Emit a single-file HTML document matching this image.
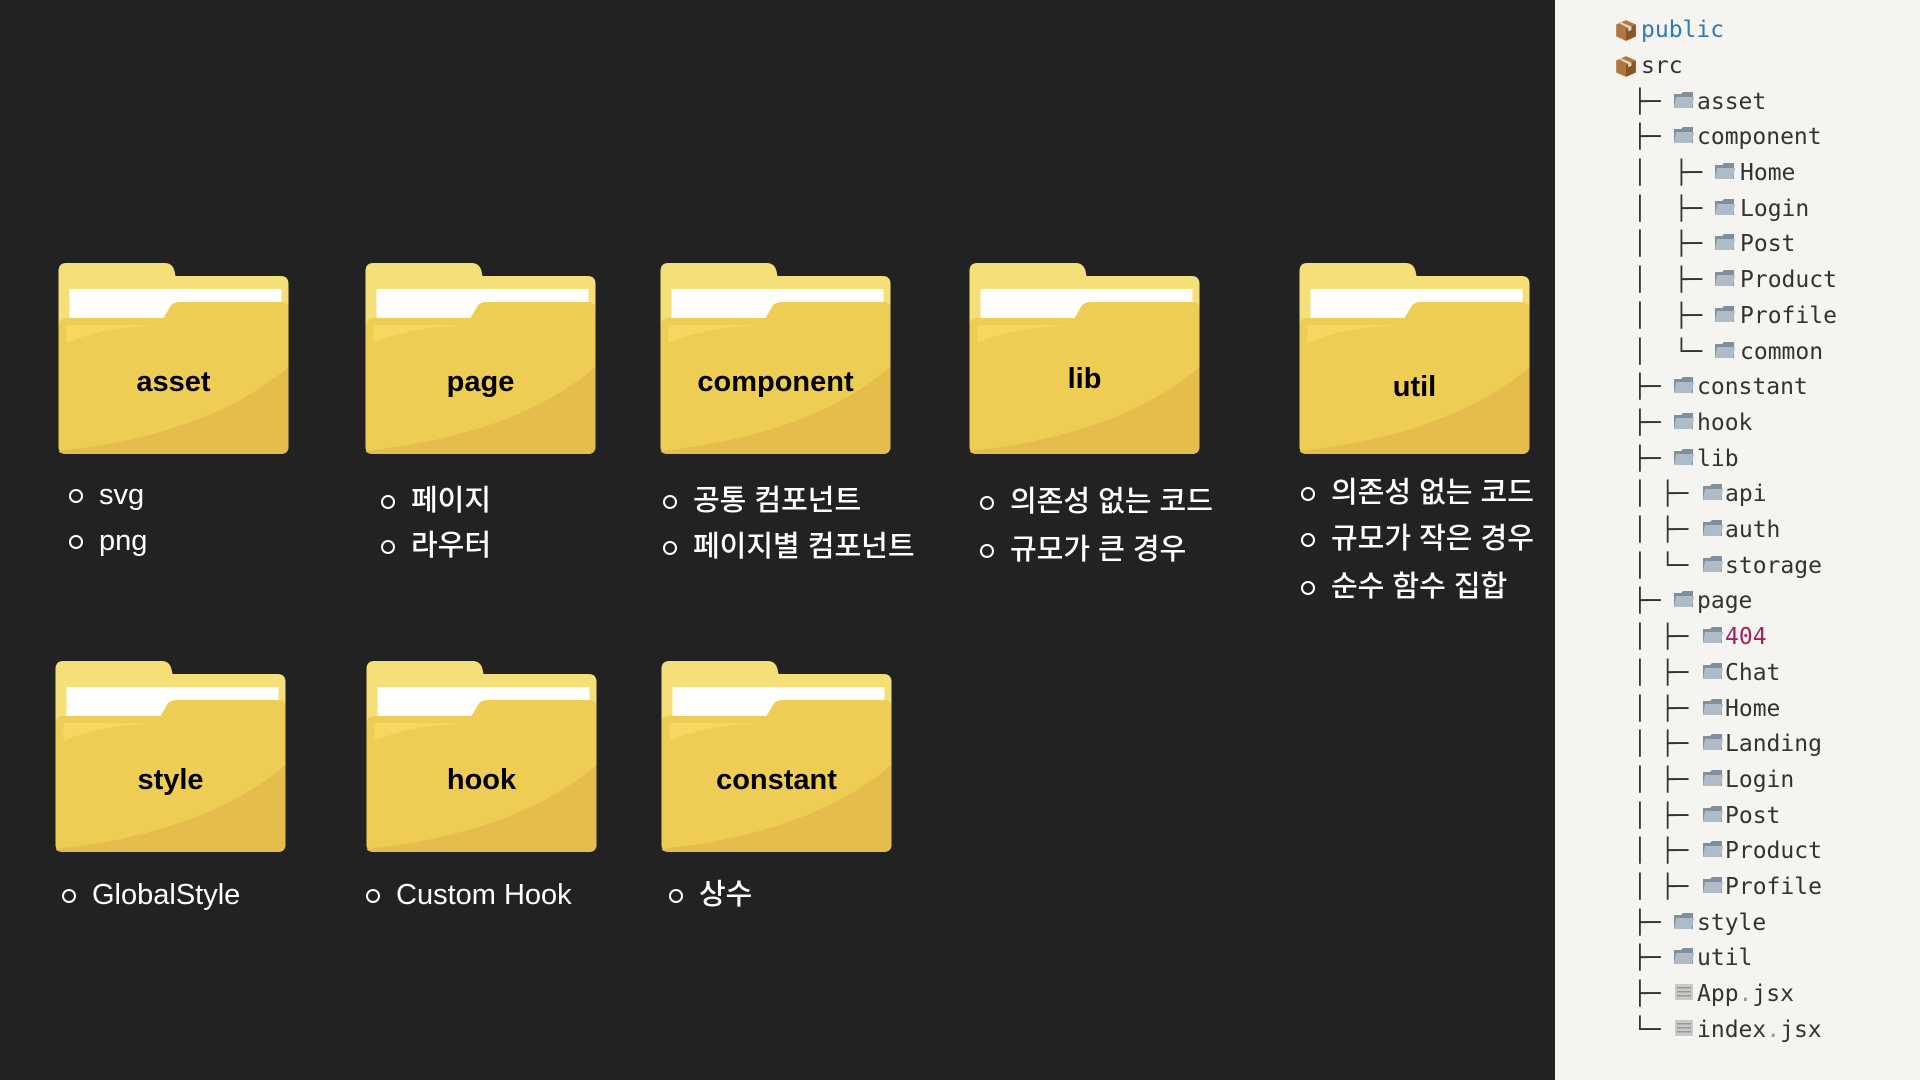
<!DOCTYPE html>
<html><head><meta charset="utf-8"><style>
html,body{margin:0;padding:0}
body{width:1920px;height:1080px;background:#222222;position:relative;overflow:hidden;font-family:"Liberation Sans","Noto Sans CJK KR",sans-serif}
.f{position:absolute;width:231px;height:191px}
.f svg{position:absolute;left:0;top:0}
.f span{position:absolute;left:0;width:231px;text-align:center;top:102px;font-size:29px;font-weight:bold;color:#000;line-height:34px}
.b{position:absolute;color:#fff;font-size:29px;line-height:34px;white-space:nowrap;font-weight:500}
.b:before{content:"";position:absolute;left:-30px;top:11px;width:10px;height:10px;border:2.5px solid #fff;border-radius:50%}
#side{position:absolute;left:1555px;top:0;width:365px;height:1080px;background:#f5f4f1}
.t{position:absolute;font-family:"DejaVu Sans Mono","Liberation Mono",monospace;font-size:23px;color:#333;line-height:30px;white-space:pre}
.ic{position:absolute;width:22px;height:20px}
</style></head><body>
<svg width="0" height="0" style="position:absolute"><defs>
<symbol id="fold" viewBox="0 0 230 191">
<path d="M0,8 Q0,0 8,0 H106 Q114,0 116,8 L117,13 H222 Q230,13 230,21 V183 Q230,191 222,191 H8 Q0,191 0,183 Z" fill="#f5df78"/>
<rect x="11" y="26" width="212" height="34" fill="#fff"/>
<path d="M0,63 Q0,55 8,55 H105 L112,43 Q115,39 121,39 H223 Q230,39 230,46 V183 Q230,191 222,191 H8 Q0,191 0,183 Z" fill="#eecd55"/>
<path d="M8,62 H100 Q40,65 8,80 Z" fill="#f4d862"/>
<path d="M0,188 Q150,172 230,104 V183 Q230,191 222,191 H8 Q2,191 0,188 Z" fill="#e4bd4c"/>
</symbol>
<symbol id="dir" viewBox="0 0 22 20"><path d="M1,4 H8 L10,2 H20 V18 H1 Z" fill="#7f8f9c"/><path d="M3,7 H21 L19,18 H1 Z" fill="#aebcc8"/></symbol>
<symbol id="box" viewBox="0 0 22 22"><path d="M2,6 L11,2 L20,6 V17 L11,21 L2,17 Z" fill="#b07840"/><path d="M11,10 L20,6 V17 L11,21 Z" fill="#8a5628"/><path d="M7,4 L16,8 V11 L13,12 V9 L5,5 Z" fill="#e8d8c0"/></symbol>
<symbol id="file" viewBox="0 0 22 20"><rect x="2" y="2" width="18" height="16" fill="#c9c9c9"/><rect x="4" y="5" width="14" height="1.5" fill="#999"/><rect x="4" y="9" width="14" height="1.5" fill="#999"/><rect x="4" y="13" width="14" height="1.5" fill="#999"/></symbol>
</defs></svg>

<div class="f" style="left:58px;top:263px"><svg width="231" height="191"><use href="#fold"/></svg><span>asset</span></div>
<div class="f" style="left:365px;top:263px"><svg width="231" height="191"><use href="#fold"/></svg><span>page</span></div>
<div class="f" style="left:660px;top:263px"><svg width="231" height="191"><use href="#fold"/></svg><span>component</span></div>
<div class="f" style="left:969px;top:263px"><svg width="231" height="191"><use href="#fold"/></svg><span style="top:99px">lib</span></div>
<div class="f" style="left:1299px;top:263px"><svg width="231" height="191"><use href="#fold"/></svg><span style="top:107px">util</span></div>
<div class="f" style="left:55px;top:661px"><svg width="231" height="191"><use href="#fold"/></svg><span>style</span></div>
<div class="f" style="left:366px;top:661px"><svg width="231" height="191"><use href="#fold"/></svg><span>hook</span></div>
<div class="f" style="left:661px;top:661px"><svg width="231" height="191"><use href="#fold"/></svg><span>constant</span></div>

<div class="b" style="left:99px;top:478px">svg</div>
<div class="b" style="left:99px;top:524px">png</div>
<div class="b" style="left:411px;top:484px">페이지</div>
<div class="b" style="left:411px;top:529px">라우터</div>
<div class="b" style="left:693px;top:484px">공통 컴포넌트</div>
<div class="b" style="left:693px;top:530px">페이지별 컴포넌트</div>
<div class="b" style="left:1010px;top:485px">의존성 없는 코드</div>
<div class="b" style="left:1010px;top:533px">규모가 큰 경우</div>
<div class="b" style="left:1331px;top:476px">의존성 없는 코드</div>
<div class="b" style="left:1331px;top:522px">규모가 작은 경우</div>
<div class="b" style="left:1331px;top:570px">순수 함수 집합</div>
<div class="b" style="left:92px;top:878px">GlobalStyle</div>
<div class="b" style="left:396px;top:878px">Custom Hook</div>
<div class="b" style="left:699px;top:878px">상수</div>

<div id="side"></div>
<svg class="ic" style="left:1614px;top:18px;width:24px;height:24px"><use href="#box"/></svg><div class="t" style="left:1641px;top:15px;color:#2f7bb5">public</div>
<svg class="ic" style="left:1614px;top:54px;width:24px;height:24px"><use href="#box"/></svg><div class="t" style="left:1641px;top:51px">src</div>

<div class="t" style="left:1633px;top:87px">├─</div><svg class="ic" style="left:1673px;top:90px"><use href="#dir"/></svg><div class="t" style="left:1697px;top:87px">asset</div>
<div class="t" style="left:1633px;top:122px">├─</div><svg class="ic" style="left:1673px;top:125px"><use href="#dir"/></svg><div class="t" style="left:1697px;top:122px">component</div>
<div class="t" style="left:1633px;top:158px">│  ├─</div><svg class="ic" style="left:1714px;top:161px"><use href="#dir"/></svg><div class="t" style="left:1740px;top:158px">Home</div>
<div class="t" style="left:1633px;top:194px">│  ├─</div><svg class="ic" style="left:1714px;top:197px"><use href="#dir"/></svg><div class="t" style="left:1740px;top:194px">Login</div>
<div class="t" style="left:1633px;top:229px">│  ├─</div><svg class="ic" style="left:1714px;top:232px"><use href="#dir"/></svg><div class="t" style="left:1740px;top:229px">Post</div>
<div class="t" style="left:1633px;top:265px">│  ├─</div><svg class="ic" style="left:1714px;top:268px"><use href="#dir"/></svg><div class="t" style="left:1740px;top:265px">Product</div>
<div class="t" style="left:1633px;top:301px">│  ├─</div><svg class="ic" style="left:1714px;top:304px"><use href="#dir"/></svg><div class="t" style="left:1740px;top:301px">Profile</div>
<div class="t" style="left:1633px;top:337px">│  └─</div><svg class="ic" style="left:1714px;top:340px"><use href="#dir"/></svg><div class="t" style="left:1740px;top:337px">common</div>
<div class="t" style="left:1633px;top:372px">├─</div><svg class="ic" style="left:1673px;top:375px"><use href="#dir"/></svg><div class="t" style="left:1697px;top:372px">constant</div>
<div class="t" style="left:1633px;top:408px">├─</div><svg class="ic" style="left:1673px;top:411px"><use href="#dir"/></svg><div class="t" style="left:1697px;top:408px">hook</div>
<div class="t" style="left:1633px;top:444px">├─</div><svg class="ic" style="left:1673px;top:447px"><use href="#dir"/></svg><div class="t" style="left:1697px;top:444px">lib</div>
<div class="t" style="left:1633px;top:479px">│ ├─</div><svg class="ic" style="left:1702px;top:482px"><use href="#dir"/></svg><div class="t" style="left:1725px;top:479px">api</div>
<div class="t" style="left:1633px;top:515px">│ ├─</div><svg class="ic" style="left:1702px;top:518px"><use href="#dir"/></svg><div class="t" style="left:1725px;top:515px">auth</div>
<div class="t" style="left:1633px;top:551px">│ └─</div><svg class="ic" style="left:1702px;top:554px"><use href="#dir"/></svg><div class="t" style="left:1725px;top:551px">storage</div>
<div class="t" style="left:1633px;top:586px">├─</div><svg class="ic" style="left:1673px;top:589px"><use href="#dir"/></svg><div class="t" style="left:1697px;top:586px">page</div>
<div class="t" style="left:1633px;top:622px">│ ├─</div><svg class="ic" style="left:1702px;top:625px"><use href="#dir"/></svg><div class="t" style="left:1725px;top:622px;color:#a0245f">404</div>
<div class="t" style="left:1633px;top:658px">│ ├─</div><svg class="ic" style="left:1702px;top:661px"><use href="#dir"/></svg><div class="t" style="left:1725px;top:658px">Chat</div>
<div class="t" style="left:1633px;top:694px">│ ├─</div><svg class="ic" style="left:1702px;top:697px"><use href="#dir"/></svg><div class="t" style="left:1725px;top:694px">Home</div>
<div class="t" style="left:1633px;top:729px">│ ├─</div><svg class="ic" style="left:1702px;top:732px"><use href="#dir"/></svg><div class="t" style="left:1725px;top:729px">Landing</div>
<div class="t" style="left:1633px;top:765px">│ ├─</div><svg class="ic" style="left:1702px;top:768px"><use href="#dir"/></svg><div class="t" style="left:1725px;top:765px">Login</div>
<div class="t" style="left:1633px;top:801px">│ ├─</div><svg class="ic" style="left:1702px;top:804px"><use href="#dir"/></svg><div class="t" style="left:1725px;top:801px">Post</div>
<div class="t" style="left:1633px;top:836px">│ ├─</div><svg class="ic" style="left:1702px;top:839px"><use href="#dir"/></svg><div class="t" style="left:1725px;top:836px">Product</div>
<div class="t" style="left:1633px;top:872px">│ ├─</div><svg class="ic" style="left:1702px;top:875px"><use href="#dir"/></svg><div class="t" style="left:1725px;top:872px">Profile</div>
<div class="t" style="left:1633px;top:908px">├─</div><svg class="ic" style="left:1673px;top:911px"><use href="#dir"/></svg><div class="t" style="left:1697px;top:908px">style</div>
<div class="t" style="left:1633px;top:943px">├─</div><svg class="ic" style="left:1673px;top:946px"><use href="#dir"/></svg><div class="t" style="left:1697px;top:943px">util</div>
<div class="t" style="left:1633px;top:979px">├─</div><svg class="ic" style="left:1673px;top:982px"><use href="#file"/></svg><div class="t" style="left:1697px;top:979px">App<span style="color:#999">.</span>jsx</div>
<div class="t" style="left:1633px;top:1015px">└─</div><svg class="ic" style="left:1673px;top:1018px"><use href="#file"/></svg><div class="t" style="left:1697px;top:1015px">index<span style="color:#999">.</span>jsx</div>
</body></html>
